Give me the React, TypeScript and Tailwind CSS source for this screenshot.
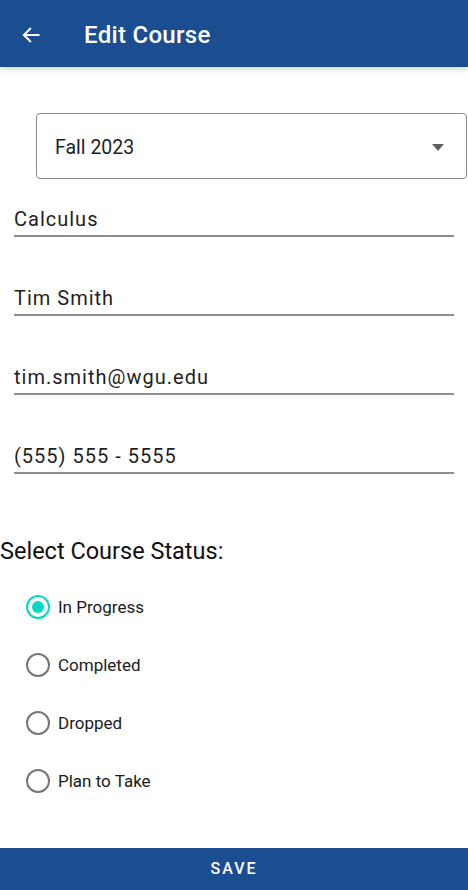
import React from "react";

const font = { fontFamily: "Roboto, 'Noto Sans', sans-serif" };

function Radio({ label, checked }: { label: string; checked?: boolean }) {
  return (
    <div className="flex h-[58px] items-center pl-[26px]">
      <div
        className={
          "flex h-[24px] w-[24px] items-center justify-center rounded-full border-[2.5px] " +
          (checked ? "border-[#03dac5]" : "border-[#757575]")
        }
      >
        {checked && <div className="h-[12px] w-[12px] rounded-full bg-[#03dac5]" />}
      </div>
      <span className="ml-[8px] text-[17px] leading-[20px] text-[#1a1a1a]">{label}</span>
    </div>
  );
}

function Field({ value, className }: { value: string; className?: string }) {
  return (
    <div
      className={
        "mx-[14px] border-b-2 border-[#8f8f8f] pb-[4px] text-[20px] leading-[24px] tracking-[1px] text-[#1f1f1f] " +
        (className ?? "")
      }
    >
      {value}
    </div>
  );
}

export default function App() {
  return (
    <div className="flex min-h-[890px] flex-col bg-white" style={font}>
      <div className="relative z-10 flex h-[67px] items-center bg-[#1b4e91] pt-[2px] shadow-[0_2px_6px_rgba(0,0,0,0.18)]">
        <svg
          className="ml-[21px]"
          width="20"
          height="20"
          viewBox="0 0 24 24"
          fill="none"
          stroke="white"
          strokeWidth="2.4"
          strokeLinecap="square"
        >
          <path d="M21 12H4" />
          <path d="M11 4.5L3.5 12L11 19.5" />
        </svg>
        <span className="ml-[43px] text-[24px] font-medium tracking-[0.3px] text-white">Edit Course</span>
      </div>

      <div className="ml-[36px] mr-[1px] mt-[46px] flex h-[66px] items-center justify-between rounded-[4px] border border-[#8a8a8a] pl-[18px] pr-[22px] pt-[3px]">
        <span className="text-[19.5px] text-[#1f1f1f]">Fall 2023</span>
        <svg width="12" height="7" viewBox="0 0 12 7">
          <path d="M0 0h12L6 7z" fill="#606060" />
        </svg>
      </div>

      <Field value="Calculus" className="mt-[28px]" />
      <Field value="Tim Smith" className="mt-[49px]" />
      <Field value="tim.smith@wgu.edu" className="mt-[49px]" />
      <Field value="(555) 555 - 5555" className="mt-[49px]" />

      <div className="mt-[63px] text-[23.5px] leading-[28px] text-[#111]">Select Course Status:</div>

      <div className="mt-[13px] flex flex-col">
        <Radio label="In Progress" checked />
        <Radio label="Completed" />
        <Radio label="Dropped" />
        <Radio label="Plan to Take" />
      </div>

      <div className="mt-auto flex h-[42px] items-center justify-center bg-[#1b4e91]">
        <span className="text-[16px] font-medium tracking-[2px] text-white">SAVE</span>
      </div>
    </div>
  );
}
